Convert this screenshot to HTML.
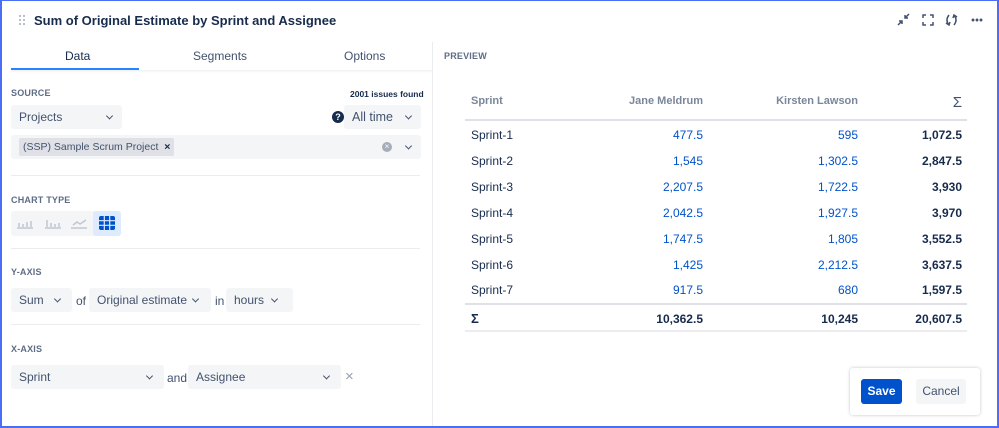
<!DOCTYPE html>
<html><head><meta charset="utf-8"><style>
*{box-sizing:border-box;margin:0;padding:0}
body{width:999px;height:428px;overflow:hidden;font-family:"Liberation Sans",sans-serif;color:#172b4d;background:#fff;position:relative;font-size:12px}
.frame{position:absolute;left:0;top:0;width:999px;height:428px;border:1px solid #4c6ef5;border-width:1px 2px 2px 2px}
.a{position:absolute}
.lbl{position:absolute;font-size:9px;font-weight:bold;color:#5e6c84;letter-spacing:.2px}
.dd{position:absolute;background:#f4f5f7;border-radius:3px;font-size:12px;color:#42526e;padding-left:8px;display:flex;align-items:center}
.chev{position:absolute;right:10px;top:50%;width:5px;height:5px;border-right:1.5px solid #42526e;border-bottom:1.5px solid #42526e;transform:translateY(-70%) rotate(45deg)}
.hr{position:absolute;left:11px;width:409px;height:1px;background:#ebecf0}
.t{position:absolute;font-size:12px}
.r{text-align:right}
.hd{font-weight:bold;color:#7a869a;font-size:11px}
</style></head><body>
<div class="frame"></div>
<svg class="a" style="left:19px;top:15px" width="6" height="10" fill="#a5adba"><circle cx="1" cy="1" r="1"/><circle cx="5" cy="1" r="1"/><circle cx="1" cy="5" r="1"/><circle cx="5" cy="5" r="1"/><circle cx="1" cy="9" r="1"/><circle cx="5" cy="9" r="1"/></svg>
<div class="a" style="left:34px;top:13px;font-size:13px;font-weight:bold;color:#172b4d">Sum of Original Estimate by Sprint and Assignee</div>
<svg class="a" style="left:896px;top:12px" width="90" height="16" viewBox="0 0 90 16" fill="none" stroke="#42526e" stroke-width="1.5">
<path d="M2 13 L6 9 M3 9 H6 V12 M13 2 L9 6 M9 3 V6 H12"/>
<path d="M27 6 V3 H30 M34 3 H37 V6 M37 10 V13 H34 M30 13 H27 V10"/>
<path d="M53 3 Q49 8 53 13 M50 11 L53 13 L54 10 M58 13 Q62 8 58 3 M61 5 L58 3 L57 6"/>
<circle cx="77" cy="8" r=".7" fill="#42526e"/><circle cx="81" cy="8" r=".7" fill="#42526e"/><circle cx="85" cy="8" r=".7" fill="#42526e"/>
</svg>
<div class="a" style="left:432px;top:42px;width:1px;height:384px;background:#ebecf0"></div>
<div class="a" style="left:11px;top:70px;width:421px;height:3px;background:linear-gradient(#f0f1f3,#fff)"></div>
<div class="t" style="left:65px;top:49px;color:#172b4d">Data</div>
<div class="t" style="left:193px;top:49px;color:#42526e">Segments</div>
<div class="t" style="left:344px;top:49px;color:#42526e">Options</div>
<div class="a" style="left:11px;top:68px;width:128px;height:2px;background:#2684ff"></div>
<div class="lbl" style="left:11px;top:88px">SOURCE</div>
<div class="a" style="left:350px;top:89px;font-size:8.5px;font-weight:bold">2001 issues found</div>
<div class="dd" style="left:11px;top:105px;width:111px;height:24px">Projects<span class="chev"></span></div>
<div class="a" style="left:332px;top:111px;width:12px;height:12px;border-radius:50%;background:#172b4d;color:#fff;font-size:9px;font-weight:bold;text-align:center;line-height:12px">?</div>
<div class="dd" style="left:344px;top:105px;width:77px;height:24px;font-size:12.5px">All time<span class="chev"></span></div>
<div class="dd" style="left:11px;top:135px;width:410px;height:24px;padding-left:8px">
<span style="background:#dfe1e6;font-size:10.5px;padding:3px 4px;border-radius:2px">(SSP) Sample Scrum Project &nbsp;<b style="color:#172b4d">×</b></span>
<span class="a" style="left:371px;top:7px;width:10px;height:10px;border-radius:50%;background:#a5adba;color:#fff;font-size:8px;line-height:10px;text-align:center">×</span>
<span class="chev"></span></div>
<div class="hr" style="top:175px"></div>
<div class="lbl" style="left:11px;top:195px">CHART TYPE</div>
<div class="a" style="left:11px;top:211px;width:110px;height:25px;background:#f4f5f7;border-radius:3px"></div>
<div class="a" style="left:93px;top:211px;width:28px;height:25px;background:#deebff;border-radius:3px"></div>
<svg class="a" style="left:11px;top:211px" width="110" height="25" fill="none" stroke="#c1c7d0" stroke-width="1.5">
<path d="M6 17 H22 M8 16 V12 M12 16 V13 M16 16 V11 M20 16 V10"/>
<path d="M34 17 H50 M36 16 V9 M40 16 V12 M44 16 V13 M48 16 V12"/>
<path d="M60 17 H76 M62 14 L66 11 L69 13 L75 9"/>
</svg>
<svg class="a" style="left:99px;top:216px" width="16" height="14"><rect x="0" y="0" width="16" height="14" rx="2" fill="#0052cc"/><path d="M0 4.7H16M0 9.3H16M5.3 0V14M10.7 0V14" stroke="#deebff" stroke-width="1.2"/></svg>
<div class="hr" style="top:248px"></div>
<div class="lbl" style="left:11px;top:267px">Y-AXIS</div>
<div class="dd" style="left:11px;top:288px;width:61px;height:24px">Sum<span class="chev" style="right:12px"></span></div>
<div class="t" style="left:76px;top:294px;color:#42526e">of</div>
<div class="dd" style="left:89px;top:288px;width:122px;height:24px">Original estimate<span class="chev" style="right:13px"></span></div>
<div class="t" style="left:215px;top:294px;color:#42526e">in</div>
<div class="dd" style="left:226px;top:288px;width:67px;height:24px">hours<span class="chev" style="right:16px"></span></div>
<div class="hr" style="top:324px"></div>
<div class="lbl" style="left:11px;top:344px">X-AXIS</div>
<div class="dd" style="left:11px;top:365px;width:153px;height:24px">Sprint<span class="chev" style="right:12px"></span></div>
<div class="t" style="left:167px;top:371px;color:#42526e">and</div>
<div class="dd" style="left:188px;top:365px;width:153px;height:24px">Assignee<span class="chev" style="right:12px"></span></div>
<div class="t" style="left:345px;top:368px;color:#97a0af;font-size:15px">×</div>
<div class="lbl" style="left:444px;top:51px">PREVIEW</div>
<div class="t hd" style="left:471px;top:95px">Sprint</div>
<div class="t r hd" style="left:560px;width:143px;top:95px">Jane Meldrum</div>
<div class="t r hd" style="left:715px;width:143px;top:95px">Kirsten Lawson</div>
<div class="t r" style="left:900px;width:62px;top:94px;font-size:15px;color:#42526e">Σ</div>
<div class="a" style="left:465px;top:119px;width:502px;height:2px;background:#dfe1e6"></div>
<div id="rows"></div>
<div class="a" style="left:465px;top:303px;width:502px;height:2px;background:#dfe1e6"></div>
<div class="t" style="left:471px;top:311px;font-weight:bold;font-size:13px">Σ</div>
<div class="t r" style="left:560px;width:143px;top:312px;font-weight:bold">10,362.5</div>
<div class="t r" style="left:715px;width:143px;top:312px;font-weight:bold">10,245</div>
<div class="t r" style="left:862px;width:100px;top:312px;font-weight:bold">20,607.5</div>
<div class="a" style="left:465px;top:330px;width:502px;height:2px;background:#ebecf0"></div>
<div class="a" style="left:850px;top:368px;width:130px;height:47px;border-radius:3px;box-shadow:0 0 3px rgba(9,30,66,.25);background:#fff"></div>
<div class="a" style="left:861px;top:379px;width:41px;height:25px;background:#0052cc;border-radius:3px;color:#fff;font-weight:bold;text-align:center;line-height:25px">Save</div>
<div class="a" style="left:916px;top:379px;width:50px;height:25px;background:#f4f5f7;border-radius:3px;color:#42526e;text-align:center;line-height:25px">Cancel</div>
<script>
var d=[["Sprint-1","477.5","595","1,072.5"],["Sprint-2","1,545","1,302.5","2,847.5"],["Sprint-3","2,207.5","1,722.5","3,930"],["Sprint-4","2,042.5","1,927.5","3,970"],["Sprint-5","1,747.5","1,805","3,552.5"],["Sprint-6","1,425","2,212.5","3,637.5"],["Sprint-7","917.5","680","1,597.5"]];
var h="";d.forEach(function(r,i){var y=128+i*25.9;
h+='<div class="t" style="left:471px;top:'+y+'px">'+r[0]+'</div><div class="t r" style="left:560px;width:143px;top:'+y+'px;color:#0052cc">'+r[1]+'</div><div class="t r" style="left:715px;width:143px;top:'+y+'px;color:#0052cc">'+r[2]+'</div><div class="t r" style="left:862px;width:100px;top:'+y+'px;font-weight:bold">'+r[3]+'</div>';});
document.getElementById("rows").innerHTML=h;
</script>
</body></html>
